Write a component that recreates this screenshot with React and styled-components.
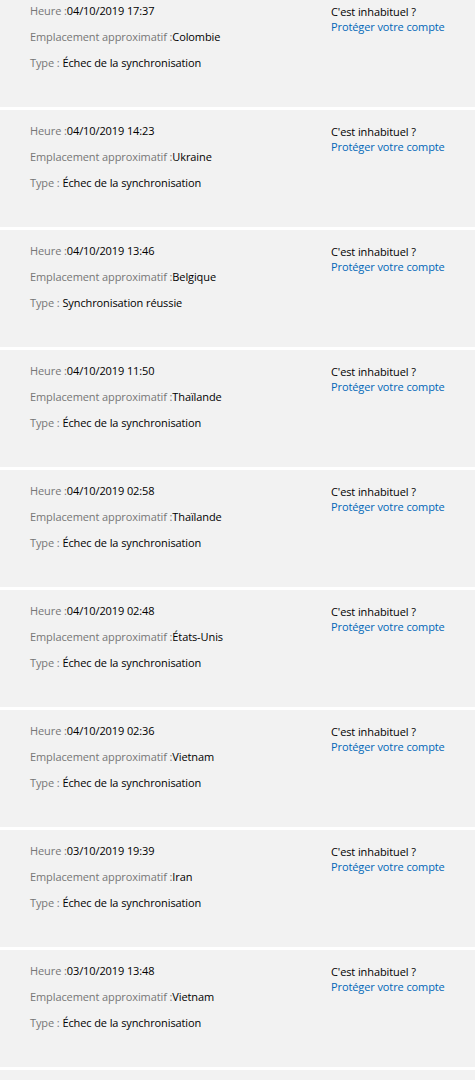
import React from 'react';
import styled, { createGlobalStyle } from 'styled-components';

const GlobalStyle = createGlobalStyle`
    html, body {
        margin: 0;
        padding: 0;
        background: #fff;
    }
    body {
        font-family: "Open Sans", "Noto Sans", sans-serif;
        font-size: 11px;
        letter-spacing: -0.1px;
        overflow: hidden;
    }
`;

const List = styled.div`
    display: flex;
    flex-direction: column;
    gap: 3px;
    margin-top: -10px;
    height: 1090px;
    overflow: hidden;
`;

const Card = styled.div`
    display: flex;
    flex-shrink: 0;
    height: 117px;
    box-sizing: border-box;
    background: #f2f2f2;
    padding: 13px 0 0 30px;
`;

const Details = styled.div`
    display: flex;
    flex-direction: column;
    gap: 10px;
    width: 301px;
`;

const Line = styled.div`
    line-height: 16px;
    color: #000;
`;

const Label = styled.span`
    color: #767676;
`;

const Alert = styled.div`
    display: flex;
    flex-direction: column;
    line-height: 15px;
    padding-top: 1px;
`;

const Question = styled.div`
    color: #000;
`;

const ProtectLink = styled.a`
    color: #0067b8;
    text-decoration: none;
    cursor: pointer;
`;

const FAIL = 'Échec de la synchronisation';

const activities = [
    { time: '04/10/2019 17:37', place: 'Colombie', type: FAIL },
    { time: '04/10/2019 14:23', place: 'Ukraine', type: FAIL },
    { time: '04/10/2019 13:46', place: 'Belgique', type: 'Synchronisation réussie' },
    { time: '04/10/2019 11:50', place: 'Thaïlande', type: FAIL },
    { time: '04/10/2019 02:58', place: 'Thaïlande', type: FAIL },
    { time: '04/10/2019 02:48', place: 'États-Unis', type: FAIL },
    { time: '04/10/2019 02:36', place: 'Vietnam', type: FAIL },
    { time: '03/10/2019 19:39', place: 'Iran', type: FAIL },
    { time: '03/10/2019 13:48', place: 'Vietnam', type: FAIL },
];

export default function App() {
    return (
        <>
            <GlobalStyle />
            <List>
                {activities.map((a, i) => (
                    <Card key={i}>
                        <Details>
                            <Line>
                                <Label>Heure :</Label>
                                {a.time}
                            </Line>
                            <Line>
                                <Label>Emplacement approximatif :</Label>
                                {a.place}
                            </Line>
                            <Line>
                                <Label>Type : </Label>
                                {a.type}
                            </Line>
                        </Details>
                        <Alert>
                            <Question>C'est inhabituel ?</Question>
                            <ProtectLink>Protéger votre compte</ProtectLink>
                        </Alert>
                    </Card>
                ))}
                <Card />
            </List>
        </>
    );
}
